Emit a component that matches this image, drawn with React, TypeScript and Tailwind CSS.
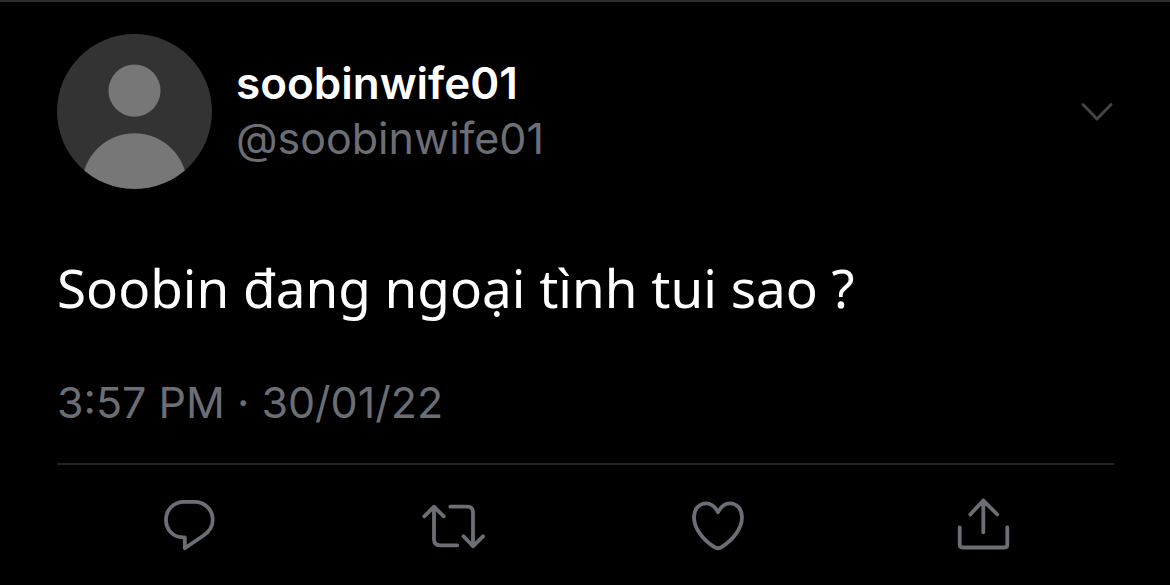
import type { ReactNode } from "react";

type ActionProps = {
  label: string;
  children: ReactNode;
};

function Action({ label, children }: ActionProps) {
  return (
    <button type="button" aria-label={label} className="flex justify-center">
      <svg
        viewBox="0 0 64 64"
        className="size-16"
        fill="none"
        stroke="currentColor"
        strokeWidth="3.8"
        strokeLinecap="round"
        strokeLinejoin="round"
      >
        {children}
      </svg>
    </button>
  );
}

function Avatar() {
  return (
    <svg viewBox="0 0 156 156" className="size-[155px] shrink-0" role="img" aria-label="soobinwife01">
      <defs>
        <clipPath id="avatar">
          <circle cx="78" cy="78" r="78" />
        </clipPath>
      </defs>
      <g clipPath="url(#avatar)">
        <rect width="156" height="156" fill="#333333" />
        <circle cx="78" cy="57" r="26.2" fill="#777777" />
        <circle cx="78" cy="153" r="53" fill="#777777" />
      </g>
    </svg>
  );
}

function App() {
  return (
    <main className="min-h-screen border-t-2 border-[#2c2c2c] bg-black pr-14 pl-[57px] pt-8 font-['Inter',sans-serif] text-[#6c6e76]">
      <article>
        <header className="flex items-center gap-6">
          <Avatar />
          <div className="flex-1 pb-0.5 leading-[55px]">
            <h1 className="text-[44px] font-semibold text-white">soobinwife01</h1>
            <p className="text-[43px]">@soobinwife01</p>
          </div>
          <button type="button" aria-label="More" className="text-[#444444]">
            <svg
              viewBox="0 0 34 24"
              className="h-6 w-[34px]"
              fill="none"
              stroke="currentColor"
              strokeWidth="3"
              strokeLinecap="round"
              strokeLinejoin="round"
            >
              <path d="M3 4.5 17 19 31 4.5" />
            </svg>
          </button>
        </header>

        <p className="mt-16 font-['Noto_Sans',sans-serif] text-[53px] leading-[70px] text-white">
          Soobin đang ngoại tình tui sao ?
        </p>

        <time dateTime="2022-01-30T15:57" className="mt-12 block text-[43px] leading-[62px]">
          3:57 PM · 30/01/22
        </time>

        <div className="mt-[30px] grid grid-cols-4 border-t-2 border-[#222324] pt-7">
          <Action label="Reply">
            <path d="M27.8 44.3H26C16 44.3 9 36.5 9 27 9 16.5 17 8.9 27 8.9h10.5c10.5 0 18.2 8.1 18.2 18.1 0 6.5-3.2 11.5-9.2 15.5L27.8 55.2z" />
          </Action>
          <Action label="Retweet">
            <path d="M3.3 23.3 13 13.7l9.7 9.6M13 13.7v32.6q0 6 6 6h17.3M29.3 13.7H46q6 0 6 6v33.6M42.5 43.3l9.5 10 10-10" />
          </Action>
          <Action label="Like">
            <path d="M32 19.3C29 13 25 10.3 20 10.3 13 10.3 8 16.5 8 24 8 36 17.5 47 28 53.9Q32 56.5 36 53.9C46.5 47 56 36 56 24 56 16.5 51 10.3 44 10.3 39 10.3 35 13 32 19.3z" />
          </Action>
          <Action label="Share">
            <path d="M20.3 21.5 33.3 7.5l14 14M33.3 7.5v31.8M9.7 34.5v17q0 3 3 3h41.6q3 0 3-3v-17" />
          </Action>
        </div>
      </article>
    </main>
  );
}

export default App;
